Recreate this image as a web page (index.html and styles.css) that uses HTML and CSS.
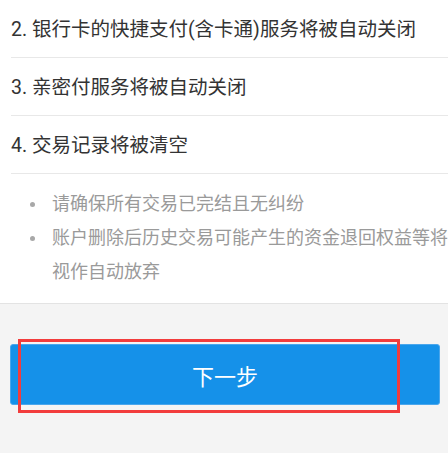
FILE: index.html
```html
<!DOCTYPE html>
<html lang="zh-CN">
<head>
    <meta charset="UTF-8">
    <meta name="viewport" content="width=device-width, initial-scale=1.0">
    <title>删除账户</title>
    <link rel="stylesheet" href="styles.css">
</head>
<body>
    <div class="panel">
        <div class="item">2. 银行卡的快捷支付(含卡通)服务将被自动关闭</div>
        <div class="item">3. 亲密付服务将被自动关闭</div>
        <div class="item">4. 交易记录将被清空</div>
        <ul class="tips">
            <li>请确保所有交易已完结且无纠纷</li>
            <li>账户删除后历史交易可能产生的资金退回权益等将被视作自动放弃</li>
        </ul>
    </div>
    <div class="actions">
        <button class="next-btn">下一步</button>
        <div class="highlight"></div>
    </div>
</body>
</html>
```

FILE: styles.css
```css
body {
    margin: 0;
    min-height: 453px;
    background-color: #f4f4f4;
    font-family: Roboto, "Noto Sans CJK SC", sans-serif;
    color: #333;
}
.panel {
    background-color: #fff;
    padding-left: 11px;
    border-bottom: 1px solid #e3e3e3;
    overflow: hidden;
}
.item {
    display: flex;
    align-items: center;
    padding-bottom: 2px;
    box-sizing: border-box;
    height: 58px;
    border-bottom: 1px solid #e8e8e8;
    font-size: 19.5px;
    white-space: nowrap;
}
.tips {
    margin: 0;
    padding: 13px 0 14px 41px;
    list-style: none;
    font-size: 18px;
    line-height: 34px;
    color: #9a9a9a;
}
.tips li {
    position: relative;
    width: 420px;
}
.tips li::before {
    content: "";
    position: absolute;
    left: -22px;
    top: 15px;
    width: 5px;
    height: 5px;
    border-radius: 50%;
    background-color: #a8a8a8;
}
.actions {
    position: relative;
    padding: 40px 8px 48px 10px;
}
.next-btn {
    display: block;
    width: 100%;
    height: 61px;
    border: 1px solid #4aa6ec;
    border-radius: 3px;
    background-color: #1591e9;
    color: #fff;
    font-family: Roboto, "Noto Sans CJK SC", sans-serif;
    font-size: 22px;
}
.highlight {
    position: absolute;
    z-index: 1;
    left: 18px;
    top: 35px;
    width: 376px;
    height: 68px;
    border: 3px solid #f23c3c;
}
```
